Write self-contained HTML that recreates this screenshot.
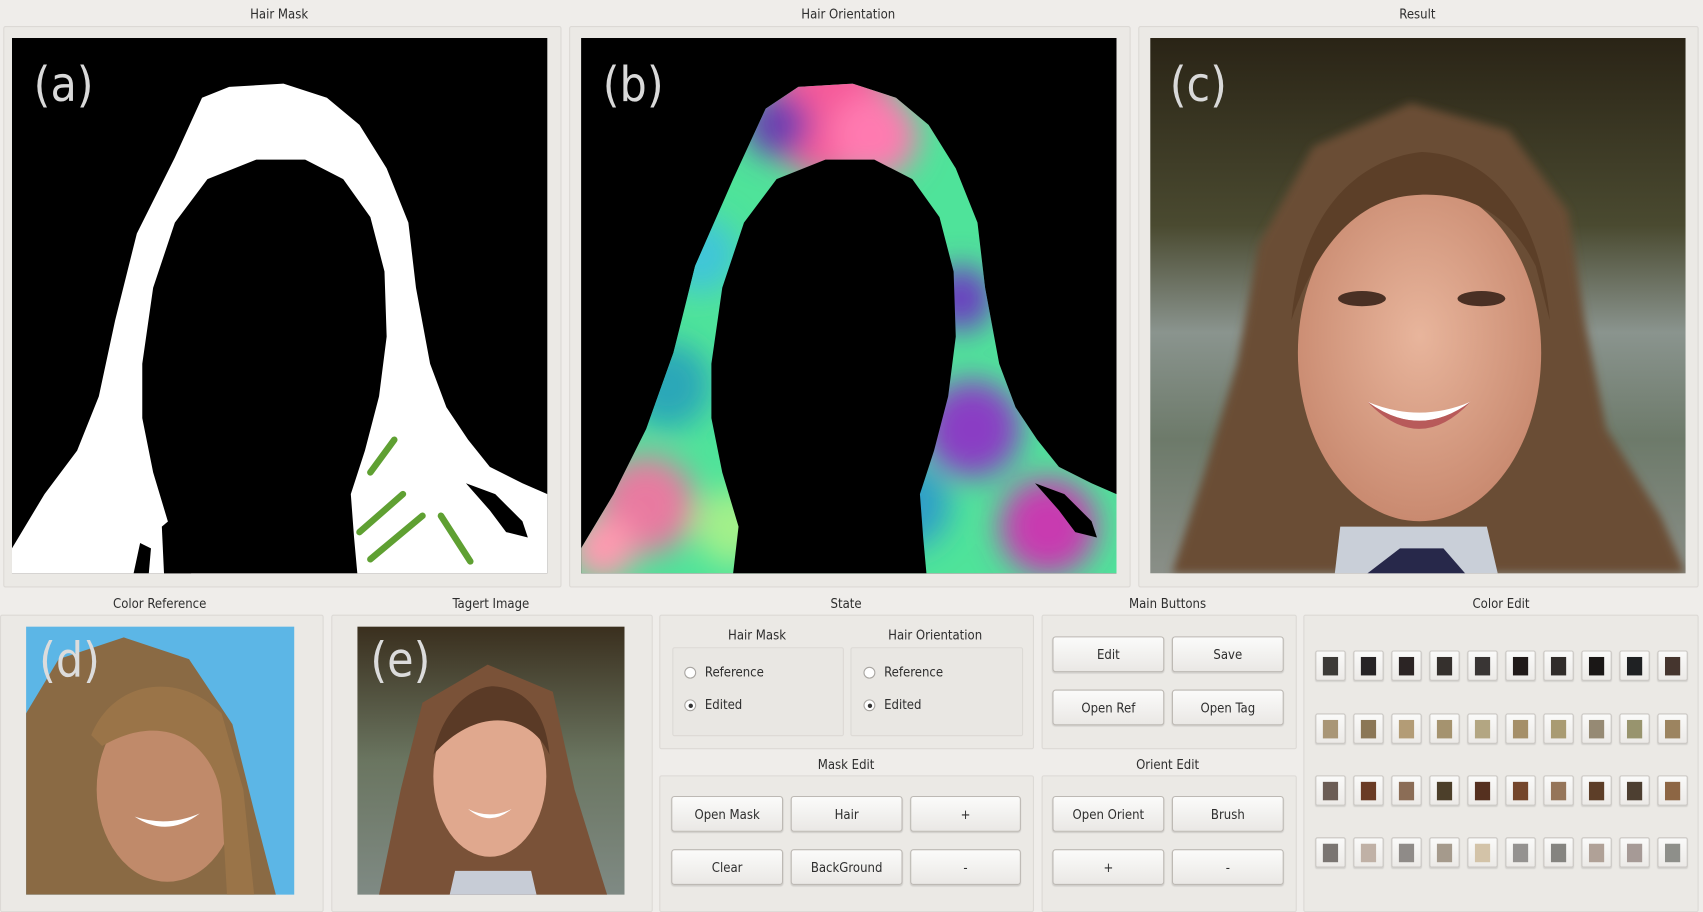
<!DOCTYPE html>
<html><head><meta charset="utf-8">
<style>
html,body{margin:0;padding:0;width:1703px;height:910px;overflow:hidden;background:#efedea;}
#s{position:absolute;left:0;top:0;width:1568px;height:838px;transform:scale(1.0861,1.0859);transform-origin:0 0;font-family:"DejaVu Sans Condensed","DejaVu Sans","Liberation Sans",sans-serif;font-stretch:condensed;font-size:12px;color:#2e2e2e;}
.a{position:absolute;}
.t{position:absolute;transform:translateX(-50%);white-space:nowrap;font-size:12px;}
.box{position:absolute;border:1px solid #dcd9d5;background:#ebe9e5;border-radius:2px;}
.btn{position:absolute;height:33px;border:1px solid #bdb9b4;border-radius:3px;background:linear-gradient(#fbfbfa,#eae8e5);box-shadow:0 1px 1px rgba(0,0,0,.12);text-align:center;line-height:33px;font-size:12px;box-sizing:border-box;}
.rad{position:absolute;width:11px;height:11px;border:1px solid #a9a6a2;border-radius:50%;background:#fff;box-sizing:border-box;}
.rad.on::after{content:"";position:absolute;left:2.5px;top:2.5px;width:4px;height:4px;border-radius:50%;background:#333;}
.sw{position:absolute;width:28px;height:28px;border:1px solid #c9c6c2;border-radius:2px;background:linear-gradient(#fafaf9,#eceae7);box-sizing:border-box;box-shadow:0 1px 1px rgba(0,0,0,.1);}
.sw i{position:absolute;left:6px;top:5px;width:14px;height:17px;}
</style></head><body><div id="s">

<div class="t" style="left:257px;top:6px">Hair Mask</div>
<div class="t" style="left:781px;top:6px">Hair Orientation</div>
<div class="t" style="left:1305px;top:6px">Result</div>
<div class="box" style="left:3px;top:24px;width:512px;height:515px"></div>
<div class="box" style="left:524px;top:24px;width:515px;height:515px"></div>
<div class="box" style="left:1048px;top:24px;width:514px;height:515px"></div>

<svg class="a" style="left:11px;top:35px" width="493" height="493" viewBox="0 0 493 493">
<rect width="493" height="493" fill="#000"/>
<path d="M0 493 L0 470 L30 420 L60 380 L80 330 L95 260 L115 180 L150 110 L175 55 L200 45 L250 42 L290 55 L320 80 L345 120 L365 170 L372 230 L385 300 L400 340 L420 370 L440 395 L470 410 L493 420 L493 493 Z" fill="#fff"/>
<path d="M140 493 L145 450 L130 400 L120 350 L120 300 L130 230 L150 170 L180 130 L225 112 L270 112 L305 130 L330 165 L343 215 L345 275 L338 330 L325 380 L312 420 L315 460 L318 493 Z" fill="#000"/>
<path d="M418 410 L445 420 L470 445 L475 460 L455 455 L440 435 Z" fill="#000"/>
<path d="M140 493 L138 450 L150 440 L160 470 L165 493 Z" fill="#000"/>
<path d="M112 493 L118 465 L128 470 L126 493Z" fill="#000"/>
<g stroke="#5fa032" stroke-width="6" fill="none" stroke-linecap="round">
<path d="M330 400 L352 370"/><path d="M320 455 L360 420"/><path d="M330 480 L378 440"/><path d="M395 440 L422 482"/>
</g>
<text x="20" y="58" font-size="44" fill="#d9d9d9" font-family="DejaVu Sans, sans-serif">(a)</text>
</svg>

<svg class="a" style="left:535px;top:35px" width="493" height="493" viewBox="0 0 493 493">
<defs>
<clipPath id="hc"><path d="M0 493 L0 470 L30 420 L60 360 L85 290 L105 210 L140 130 L170 65 L200 45 L250 42 L290 55 L320 80 L345 120 L365 170 L372 230 L385 300 L400 340 L420 370 L440 395 L470 410 L493 420 L493 493 Z"/></clipPath>
<filter id="bl"><feGaussianBlur stdDeviation="14"/></filter>
</defs>
<rect width="493" height="493" fill="#000"/>
<g clip-path="url(#hc)">
<rect width="493" height="493" fill="#4fe39a"/>
<g filter="url(#bl)">
<circle cx="230" cy="70" r="60" fill="#f55a9a"/><circle cx="180" cy="80" r="30" fill="#6a3fb0"/><circle cx="270" cy="90" r="40" fill="#ff7ab0"/>
<circle cx="110" cy="200" r="35" fill="#41c6d8"/><circle cx="80" cy="320" r="40" fill="#2aa7b8"/><circle cx="60" cy="430" r="45" fill="#e87aa0"/>
<circle cx="350" cy="240" r="30" fill="#6b3fc0"/><circle cx="360" cy="360" r="45" fill="#8a3ec4"/><circle cx="430" cy="450" r="45" fill="#c83bb0"/>
<circle cx="300" cy="430" r="40" fill="#2f9fc8"/><circle cx="140" cy="450" r="35" fill="#a3f08a"/><circle cx="20" cy="470" r="30" fill="#ff9ab0"/>
</g>
</g>
<path d="M140 493 L145 450 L130 400 L120 350 L120 300 L130 230 L150 170 L180 130 L225 112 L270 112 L305 130 L330 165 L343 215 L345 275 L338 330 L325 380 L312 420 L315 460 L318 493 Z" fill="#000"/>
<path d="M418 410 L445 420 L470 445 L475 460 L455 455 L440 435 Z" fill="#000"/>
<text x="20" y="58" font-size="44" fill="#d9d9d9" font-family="DejaVu Sans, sans-serif">(b)</text>
</svg>

<svg class="a" style="left:1059px;top:35px" width="493" height="493" viewBox="0 0 493 493">
<defs>
<linearGradient id="bg" x1="0" y1="0" x2="0" y2="1"><stop offset="0" stop-color="#2a2416"/><stop offset=".35" stop-color="#4a4a30"/><stop offset=".55" stop-color="#8a948e"/><stop offset=".75" stop-color="#6d7a6a"/><stop offset="1" stop-color="#8a8f88"/></linearGradient>
<radialGradient id="sk" cx=".5" cy=".45" r=".55"><stop offset="0" stop-color="#e8b59c"/><stop offset="1" stop-color="#c98a70"/></radialGradient>
<filter id="b2"><feGaussianBlur stdDeviation="4"/></filter>
</defs>
<rect width="493" height="493" fill="url(#bg)"/>
<path d="M20 493 L50 400 L80 300 L100 190 L150 100 L240 60 L330 85 L385 160 L400 260 L420 360 L470 440 L493 493 Z" fill="#6b4d34" filter="url(#b2)"/>
<path d="M170 493 L175 450 L310 450 L320 493Z" fill="#c9cfd8"/>
<path d="M200 493 L230 470 L270 470 L290 493Z" fill="#27284a"/>
<ellipse cx="248" cy="290" rx="112" ry="155" fill="url(#sk)"/>
<path d="M130 260 C140 150 200 110 250 105 C320 108 360 170 368 260 L355 210 C330 160 290 140 240 145 C185 150 150 200 130 260Z" fill="#5c3f28"/>
<ellipse cx="195" cy="240" rx="22" ry="7" fill="#4a3024"/><ellipse cx="305" cy="240" rx="22" ry="7" fill="#4a3024"/>
<path d="M200 335 Q248 370 295 335 Q248 355 200 335Z" fill="#fff"/>
<path d="M200 335 Q248 385 295 335 Q248 370 200 335Z" fill="#b85a5a"/>
<text x="18" y="58" font-size="44" fill="#d9d9d9" font-family="DejaVu Sans, sans-serif">(c)</text>
</svg>

<div class="t" style="left:147px;top:549px">Color Reference</div>
<div class="t" style="left:452px;top:549px">Tagert Image</div>
<div class="t" style="left:779px;top:549px">State</div>
<div class="t" style="left:1075px;top:549px">Main Buttons</div>
<div class="t" style="left:1382px;top:549px">Color Edit</div>

<div class="box" style="left:0px;top:566px;width:296px;height:272px"></div>
<div class="box" style="left:305px;top:566px;width:294px;height:272px"></div>

<svg class="a" style="left:24px;top:577px" width="247" height="247" viewBox="0 0 247 247">
<rect width="247" height="247" fill="#5cb6e6"/>
<path d="M0 247 L0 80 L30 30 L90 10 L150 30 L190 90 L210 170 L230 247Z" fill="#8a6a44"/>
<ellipse cx="130" cy="150" rx="65" ry="85" fill="#c08a6a"/>
<path d="M60 100 C80 50 140 40 180 80 L200 150 L210 247 L185 247 L180 160 C175 110 130 75 70 110Z" fill="#9a7448"/>
<path d="M100 175 Q130 195 160 172 Q130 185 100 175Z" fill="#fff"/>
<text x="12" y="46" font-size="44" fill="#dcdcdc" font-family="DejaVu Sans, sans-serif">(d)</text>
</svg>
<svg class="a" style="left:329px;top:577px" width="246" height="247" viewBox="0 0 246 247">
<defs><linearGradient id="bg2" x1="0" y1="0" x2="0" y2="1"><stop offset="0" stop-color="#3a2f1e"/><stop offset=".5" stop-color="#6a7560"/><stop offset="1" stop-color="#7f8a84"/></linearGradient></defs>
<rect width="246" height="247" fill="url(#bg2)"/>
<path d="M20 247 L40 150 L60 70 L120 35 L180 60 L200 150 L230 247Z" fill="#7a5238"/>
<path d="M85 247 L90 225 L160 225 L165 247Z" fill="#c7ccd6"/>
<ellipse cx="122" cy="138" rx="52" ry="74" fill="#e0a88e"/>
<path d="M70 118 C80 70 110 55 125 55 C160 57 174 85 177 118 C160 80 110 72 70 118Z" fill="#5a3a26"/>
<path d="M102 168 Q122 185 142 168 Q122 178 102 168Z" fill="#fff"/>
<text x="12" y="46" font-size="44" fill="#dcdcdc" font-family="DejaVu Sans, sans-serif">(e)</text>
</svg>

<div class="box" style="left:607px;top:566px;width:343px;height:122px"></div>
<div class="t" style="left:697px;top:578px">Hair Mask</div>
<div class="t" style="left:861px;top:578px">Hair Orientation</div>
<div class="box" style="left:619px;top:596px;width:156px;height:80px;background:#e9e7e3"></div>
<div class="box" style="left:783px;top:596px;width:157px;height:80px;background:#e9e7e3"></div>
<div class="rad" style="left:630px;top:614px"></div><div class="a" style="left:649px;top:612px">Reference</div>
<div class="rad on" style="left:630px;top:644px"></div><div class="a" style="left:649px;top:642px">Edited</div>
<div class="rad" style="left:795px;top:614px"></div><div class="a" style="left:814px;top:612px">Reference</div>
<div class="rad on" style="left:795px;top:644px"></div><div class="a" style="left:814px;top:642px">Edited</div>

<div class="t" style="left:779px;top:697px">Mask Edit</div>
<div class="box" style="left:607px;top:714px;width:343px;height:124px"></div>
<div class="btn" style="left:618px;top:733px;width:103px">Open Mask</div>
<div class="btn" style="left:728px;top:733px;width:103px">Hair</div>
<div class="btn" style="left:838px;top:733px;width:102px">+</div>
<div class="btn" style="left:618px;top:782px;width:103px">Clear</div>
<div class="btn" style="left:728px;top:782px;width:103px">BackGround</div>
<div class="btn" style="left:838px;top:782px;width:102px">-</div>

<div class="box" style="left:959px;top:566px;width:233px;height:122px"></div>
<div class="btn" style="left:969px;top:586px;width:103px">Edit</div>
<div class="btn" style="left:1079px;top:586px;width:103px">Save</div>
<div class="btn" style="left:969px;top:635px;width:103px">Open Ref</div>
<div class="btn" style="left:1079px;top:635px;width:103px">Open Tag</div>

<div class="t" style="left:1075px;top:697px">Orient Edit</div>
<div class="box" style="left:959px;top:714px;width:233px;height:124px"></div>
<div class="btn" style="left:969px;top:733px;width:103px">Open Orient</div>
<div class="btn" style="left:1079px;top:733px;width:103px">Brush</div>
<div class="btn" style="left:969px;top:782px;width:103px">+</div>
<div class="btn" style="left:1079px;top:782px;width:103px">-</div>

<div class="box" style="left:1200px;top:566px;width:362px;height:272px"></div>
<div id="sws"></div>
<script>
var c=[["#3d3b38","#262325","#2b2424","#35302d","#393534","#201a19","#302c2a","#1a1716","#1f2123","#45352e"],
["#a99676","#8b7756","#b39c76","#a5936f","#b3a682","#a58f68","#a99b72","#968a74","#98946e","#9c8460"],
["#6b5d55","#6a3b24","#8b6d56","#4c3f2a","#55301f","#74462b","#957559","#5d3e28","#4d3f31","#8d6644"],
["#7a7572","#c0b1a6","#8f8b88","#a59a8c","#d3c3a8","#949290","#858480","#b0a197","#a69a96","#8e8f8a"]];
var ys=[599,657,714,771],h="";
for(var r=0;r<4;r++)for(var i=0;i<10;i++)h+='<div class="sw" style="left:'+(1211+i*35)+'px;top:'+ys[r]+'px"><i style="background:'+c[r][i]+'"></i></div>';
document.getElementById("sws").innerHTML=h;
</script>
</div></body></html>
